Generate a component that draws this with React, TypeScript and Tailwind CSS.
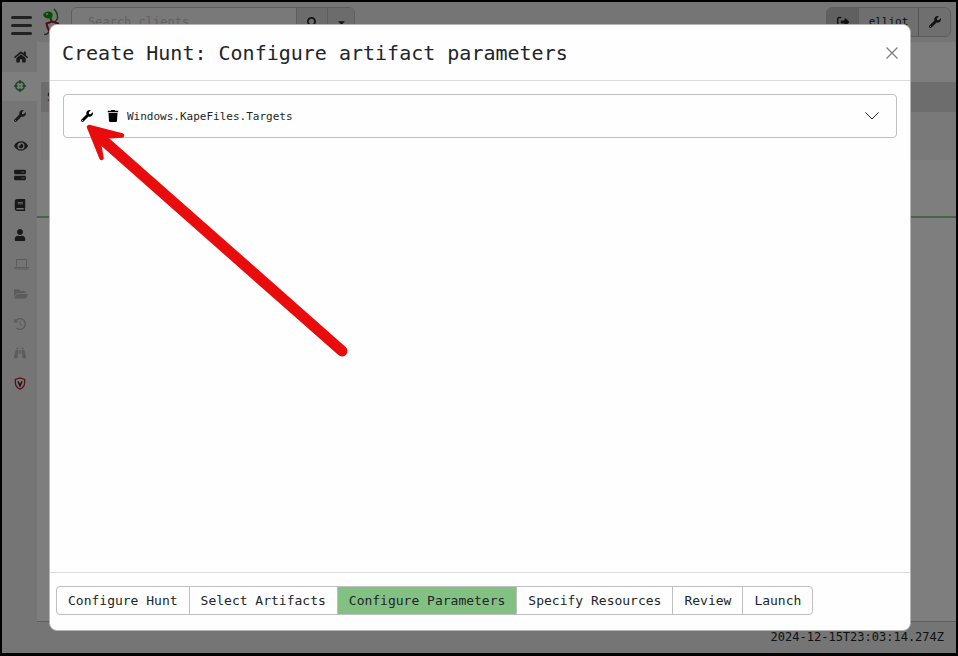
import {
  FaHome, FaCrosshairs, FaWrench, FaEye, FaBook, FaUser,
  FaFolderOpen, FaBinoculars, FaTrash, FaSearch, FaCaretDown,
} from "react-icons/fa";
import { FaClockRotateLeft, FaRightFromBracket, FaServer } from "react-icons/fa6";

const steps = [
  "Configure Hunt",
  "Select Artifacts",
  "Configure Parameters",
  "Specify Resources",
  "Review",
  "Launch",
];

function Shield() {
  return (
    <svg viewBox="0 0 12 14" className="h-[13px] w-3" fill="none">
      <path d="M6 1 1 2.600V6c0 3.400 2 5.800 5 7 3-1.200 5-3.600 5-7V2.600Z" stroke="#c01828" strokeWidth="1.400" />
      <path d="m3.800 4.500 2.200 5 2.200-5" stroke="#222" strokeWidth="1.500" />
    </svg>
  );
}

function Laptop() {
  return (
    <svg viewBox="0 0 15 12" className="h-3 w-[15px]" fill="none" stroke="currentColor">
      <path d="M2.500 8.500v-7h10v7" />
      <path d="M.5 9.500h14l-1 1.500h-12Z" />
    </svg>
  );
}

function Logo() {
  return (
    <svg viewBox="0 0 18 30" className="h-[30px] w-[18px]" fill="none">
      <path d="M12 1q4 4 3.500 9-.5 3-4.500 5" stroke="#1c8a1c" strokeWidth="1.500" />
      <path d="M1 7c1-3.500 6-4.500 8.500-2.500 2 1.500 1.500 5.500-1 6S2 10 1 7Z" fill="#0f9a0f" />
      <circle cx="5" cy="6" r="1" fill="#dfd" />
      <path d="M8 10q2 2 1 4" stroke="#0f8a0f" strokeWidth="2" />
      <path d="m4.500 15.500 5.500-2 6 2v6q-2 4-5 5-5-3-6.500-11Z" fill="#eee" stroke="#b01020" strokeWidth="2" />
      <path d="M2 26.500q4 0 5-3" stroke="#1c8a1c" strokeWidth="1.500" />
    </svg>
  );
}

const nav = [
  { label: "Home", icon: <FaHome className="text-[14px]" /> },
  { label: "Hunt Manager", icon: <FaCrosshairs />, active: true },
  { label: "View Artifacts", icon: <FaWrench /> },
  { label: "Server Events", icon: <FaEye className="text-[14px]" /> },
  { label: "Server Artifacts", icon: <FaServer /> },
  { label: "Notebooks", icon: <FaBook /> },
  { label: "Users", icon: <FaUser /> },
  { label: "Host Information", icon: <Laptop />, disabled: true },
  { label: "Virtual Filesystem", icon: <FaFolderOpen className="text-[14px]" />, disabled: true },
  { label: "Collected Artifacts", icon: <FaClockRotateLeft />, disabled: true },
  { label: "Client Events", icon: <FaBinoculars />, disabled: true },
  { label: "Documentation", icon: <Shield /> },
];

function Background() {
  return (
    <div className="flex min-h-0 flex-1 flex-col bg-[#ebebeb]">
      <header className="flex h-10 shrink-0 items-start">
        <button aria-label="Menu" className="mt-[14px] ml-[9px] flex w-[21px] flex-col gap-[5px]">
          <span className="h-[3px] w-full rounded bg-[#444]" />
          <span className="h-[3px] w-full rounded bg-[#444]" />
          <span className="h-[3px] w-full rounded bg-[#444]" />
        </button>
        <div className="mt-[6px] ml-[10px]"><Logo /></div>
        <div className="mt-[5px] ml-[11px] flex h-[30px] w-[284px] overflow-hidden rounded-md border border-[#bbb]">
          <input aria-label="Search clients" placeholder="Search clients" className="min-w-0 flex-1 bg-[#f2f2f2] px-4 text-[12px] placeholder:text-[#c4c4c4]" />
          <button aria-label="Search" className="flex w-[31px] items-center justify-center border-l border-[#bbb] bg-[#d8d8d8] text-[11px]"><FaSearch /></button>
          <button aria-label="Search options" className="flex w-[27px] items-center justify-center border-l border-[#bbb] bg-[#d8d8d8] text-[11px]"><FaCaretDown /></button>
        </div>
        <div className="mt-[5px] mr-[5px] ml-auto flex h-[30px] overflow-hidden rounded-md border border-[#bbb] bg-[#dedede]">
          <button aria-label="Log out" className="flex w-8 items-center justify-center bg-[#c0c0c0] text-xs"><FaRightFromBracket /></button>
          <button className="w-[60px] border-r border-[#aaa] text-[11px]">elliot</button>
          <button aria-label="Preferences" className="flex w-[31px] items-center justify-center text-xs"><FaWrench /></button>
        </div>
      </header>
      <div className="flex min-h-0 flex-1">
        <nav className="grid h-[356px] w-[35px] shrink-0 grid-rows-12">
          {nav.map((n) => (
            <a
              key={n.label}
              href="#"
              aria-label={n.label}
              className={
                "flex items-center pl-3 text-xs " +
                (n.active ? "bg-[#fdfdfd] text-[#2f8f3a]" : n.disabled ? "text-[#b9b9b9]" : "text-[#333]")
              }
            >
              {n.icon}
            </a>
          ))}
        </nav>
        <main className="mb-[31px] flex flex-1 flex-col border-b border-[#bbb] bg-[#fdfdfd]">
          <div className="mt-10 ml-1 h-[30px] bg-[#dadada] pl-1.5 text-[12px] leading-[30px]">State</div>
          <div className="ml-1 h-12 bg-[#f3f3f3]" />
          <div className="mt-14 h-0.5 bg-[#8bcf8b]" />
        </main>
      </div>
    </div>
  );
}

export default function App() {
  return (
    <div className="relative flex h-screen flex-col overflow-hidden border-2 border-b-3 border-black font-['DejaVu_Sans_Mono',monospace] text-[#212529]">
      <Background />
      <time className="absolute right-3 bottom-2 text-[12px] leading-4">2024-12-15T23:03:14.274Z</time>
      <div className="absolute inset-0 flex bg-black/50 pt-[22px] pr-[45px] pb-[22px] pl-[47px]">
        <div role="dialog" aria-labelledby="hunt-title" className="flex flex-1 flex-col rounded-lg border border-[#b4b4b4] bg-[#fefefe]">
          <div className="flex h-14 shrink-0 items-center justify-between border-b border-[#dcdcdc] px-3">
            <h1 id="hunt-title" className="text-[20px] leading-6">Create Hunt: Configure artifact parameters</h1>
            <button aria-label="Close" className="text-[#7f7f7f]">
              <svg viewBox="0 0 12 12" className="h-3 w-3" stroke="currentColor" strokeWidth="1.300"><path d="m.5.5 11 11m0-11-11 11" /></svg>
            </button>
          </div>
          <div className="min-h-0 flex-1 p-[13px]">
            <div className="flex h-11 items-center rounded border border-[#bfbfbf] px-[17px] text-black">
              <button aria-label="Configure artifact" className="text-[12px]"><FaWrench /></button>
              <button aria-label="Remove artifact" className="ml-[14px] text-[12px]"><FaTrash /></button>
              <span className="ml-2 text-[11px] leading-[17px] text-[#212529]">Windows.KapeFiles.Targets</span>
              <button aria-label="Expand" className="ml-auto">
                <svg viewBox="0 0 14 8" className="h-2 w-3.5" fill="none" stroke="#212529"><path d="m.5.5 6.500 6.500 6.500-6.500" /></svg>
              </button>
            </div>
          </div>
          <div className="flex h-[58px] shrink-0 items-center border-t border-[#dcdcdc] pb-0.5 pl-[6px]">
            {steps.map((s) => (
              <button
                key={s}
                className={
                  "-mr-px h-[29px] border border-[#bfbfbf] px-[11px] text-[13px] leading-4 first:rounded-l last:rounded-r " +
                  (s === "Configure Parameters" ? "bg-[#83c183]" : "")
                }
              >
                {s}
              </button>
            ))}
          </div>
        </div>
      </div>
      <svg viewBox="0 0 958 656" className="pointer-events-none absolute -top-0.5 -left-0.5 h-[656px] w-[958px]" fill="none" stroke="#e90c0c" strokeLinecap="round" strokeLinejoin="round">
        <path d="M342 351 104 141" strokeWidth="11" />
        <path d="m89 127 33 8.500-16 1-7 8 2.500 13.500Z" fill="#e90c0c" strokeWidth="4.500" />
      </svg>
    </div>
  );
}
